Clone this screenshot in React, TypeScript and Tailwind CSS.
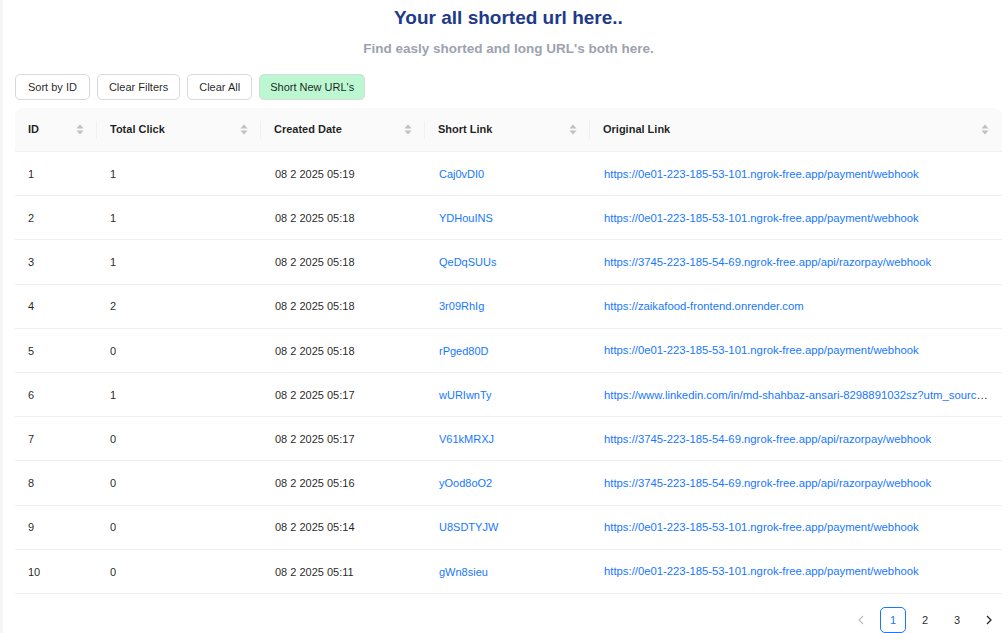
import React from "react";

type Row = { id: number; clicks: number; date: string; short: string; orig: string };

const A = "https://0e01-223-185-53-101.ngrok-free.app/payment/webhook";
const B = "https://3745-223-185-54-69.ngrok-free.app/api/razorpay/webhook";

const rows: Row[] = [
  { id: 1, clicks: 1, date: "08 2 2025 05:19", short: "Caj0vDI0", orig: A },
  { id: 2, clicks: 1, date: "08 2 2025 05:18", short: "YDHouINS", orig: A },
  { id: 3, clicks: 1, date: "08 2 2025 05:18", short: "QeDqSUUs", orig: B },
  { id: 4, clicks: 2, date: "08 2 2025 05:18", short: "3r09RhIg", orig: "https://zaikafood-frontend.onrender.com" },
  { id: 5, clicks: 0, date: "08 2 2025 05:18", short: "rPged80D", orig: A },
  {
    id: 6,
    clicks: 1,
    date: "08 2 2025 05:17",
    short: "wURIwnTy",
    orig: "https://www.linkedin.com/in/md-shahbaz-ansari-8298891032sz?utm_source=share&utm_campaign=share_via&utm_content=profile",
  },
  { id: 7, clicks: 0, date: "08 2 2025 05:17", short: "V61kMRXJ", orig: B },
  { id: 8, clicks: 0, date: "08 2 2025 05:16", short: "yOod8oO2", orig: B },
  { id: 9, clicks: 0, date: "08 2 2025 05:14", short: "U8SDTYJW", orig: A },
  { id: 10, clicks: 0, date: "08 2 2025 05:11", short: "gWn8sieu", orig: A },
];

function SortIcon() {
  return (
    <svg width="8" height="11" viewBox="0 0 8 11" className="shrink-0">
      <path d="M4 0.5 L7.5 4.5 L0.5 4.5 Z" fill="#bfbfbf" />
      <path d="M0.5 6.5 L7.5 6.5 L4 10.5 Z" fill="#bfbfbf" />
    </svg>
  );
}

const headers = [
  { label: "ID", w: "w-[82px]", sep: true },
  { label: "Total Click", w: "w-[164px]", sep: true },
  { label: "Created Date", w: "w-[164px]", sep: true },
  { label: "Short Link", w: "w-[165px]", sep: true },
  { label: "Original Link", w: "w-[412px]", sep: false },
];

export default function App() {
  return (
    <div
      className="flex min-h-screen bg-white text-[rgba(0,0,0,0.88)]"
      style={{ fontFamily: '"Liberation Sans", Arial, sans-serif' }}
    >
      <div className="w-[3px] shrink-0 bg-[#f3f4f6]" />
      <main className="flex-1 pl-3 pr-[6px] min-w-0">
        <div className="pt-[6px] text-center">
          <h1 className="text-[19px] leading-[24px] font-bold text-[#1e3a8a]">Your all shorted url here..</h1>
          <p className="mt-[10px] text-[13.5px] leading-[18px] font-bold text-[#9ca3af]">
            Find easly shorted and long URL's both here.
          </p>
        </div>

        <div className="mt-4 flex gap-[7px]">
          <button className="h-[26px] px-3 rounded-[5px] border border-[#d9d9d9] bg-white text-[11px] leading-[24px]">Sort by ID</button>
          <button className="h-[26px] px-[11px] rounded-[5px] border border-[#d9d9d9] bg-white text-[11px] leading-[24px]">Clear Filters</button>
          <button className="h-[26px] px-[11px] rounded-[5px] border border-[#d9d9d9] bg-white text-[11px] leading-[24px]">Clear All</button>
          <button className="h-[26px] px-[10px] rounded-[5px] border border-[#d9d9d9] bg-[#bbf7d0] text-[11px] leading-[24px]">Short New URL's</button>
        </div>

        <table className="mt-2 w-[987px] table-fixed border-separate border-spacing-0 text-[11px]">
          <colgroup>
            {headers.map((h) => (
              <col key={h.label} className={h.w} />
            ))}
          </colgroup>
          <thead>
            <tr>
              {headers.map((h, i) => (
                <th
                  key={h.label}
                  className={`relative h-[44px] bg-[#fafafa] border-b border-[#f0f0f0] px-[13px] text-left font-bold ${
                    i === 0 ? "rounded-tl-[8px]" : ""
                  } ${i === headers.length - 1 ? "rounded-tr-[8px]" : ""}`}
                >
                  <div className="flex items-center justify-between">
                    <span>{h.label}</span>
                    <SortIcon />
                  </div>
                  {h.sep && <span className="absolute right-0 top-1/2 -translate-y-1/2 h-[18px] w-px bg-[#f0f0f0]" />}
                </th>
              ))}
            </tr>
          </thead>
          <tbody>
            {rows.map((r) => (
              <tr key={r.id}>
                <td className="h-[44.2px] border-b border-[#f0f0f0] px-[13px] pt-px">{r.id}</td>
                <td className="border-b border-[#f0f0f0] px-[13px] pt-px">{r.clicks}</td>
                <td className="border-b border-[#f0f0f0] pl-[14px] pr-[13px] pt-px">{r.date}</td>
                <td className="border-b border-[#f0f0f0] pl-[14px] pr-[13px] pt-px">
                  <a className="text-[#1677ff]">{r.short}</a>
                </td>
                <td className="border-b border-[#f0f0f0] pl-[14px] pr-[13px] pt-px truncate text-[11.3px]">
                  <a className="text-[#1677ff]">{r.orig}</a>
                </td>
              </tr>
            ))}
          </tbody>
        </table>

        <div className="mt-[13px] flex justify-end gap-[6px] text-[11px]">
          <span className="w-[26px] h-[26px] flex items-center justify-center text-[#bfbfbf]">
            <svg width="8" height="10" viewBox="0 0 8 10">
              <path d="M6 1 L2 5 L6 9" fill="none" stroke="currentColor" strokeWidth="1.2" />
            </svg>
          </span>
          <span className="w-[26px] h-[26px] flex items-center justify-center rounded-[5px] border border-[#1677ff] text-[#1677ff]">
            1
          </span>
          <span className="w-[26px] h-[26px] flex items-center justify-center">2</span>
          <span className="w-[26px] h-[26px] flex items-center justify-center">3</span>
          <span className="w-[26px] h-[26px] flex items-center justify-center text-[rgba(0,0,0,0.88)]">
            <svg width="8" height="10" viewBox="0 0 8 10">
              <path d="M2 1 L6 5 L2 9" fill="none" stroke="currentColor" strokeWidth="1.2" />
            </svg>
          </span>
        </div>
      </main>
    </div>
  );
}
